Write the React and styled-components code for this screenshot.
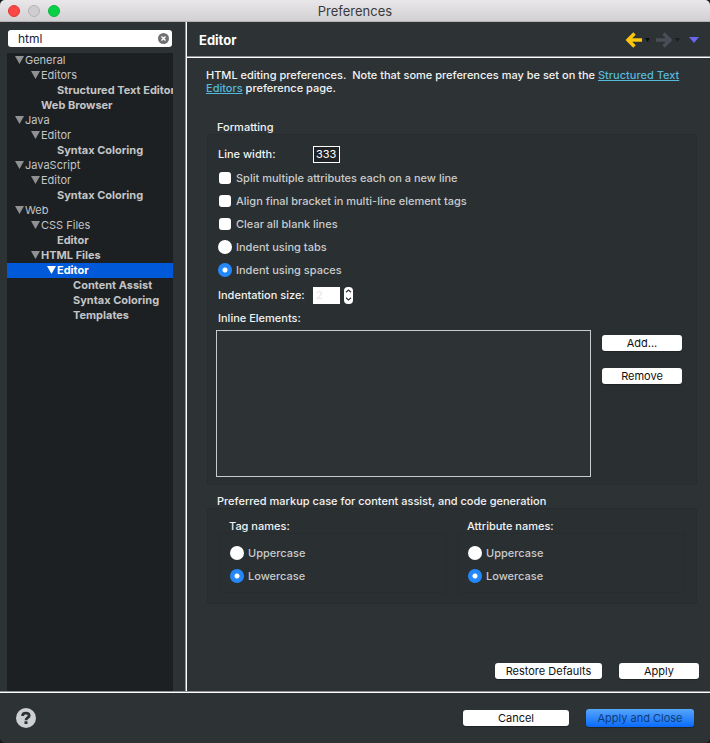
import React, { useState } from "react";
import styled, { createGlobalStyle } from "styled-components";

const GlobalStyle = createGlobalStyle`
  * { box-sizing: border-box; }
  body {
    margin: 0;
    background: #15181a;
    color: #f2f2f2;
    font: 500 11px/14px Inter, "Liberation Sans", sans-serif;
  }
  button, input { font: inherit; }
`;

const Window = styled.div`
  display: flex;
  flex-direction: column;
  min-height: 100vh;
  overflow: hidden;
  border-radius: 5px;
  background: #2d3235;
`;

const TitleBar = styled.header`
  display: grid;
  grid-template-columns: 1fr auto 1fr;
  align-items: center;
  height: 22px;
  padding: 0 8px;
  background: linear-gradient(#e9e7e9, #d2d0d2);
  border-bottom: 1px solid #b4b2b4;
`;

const Lights = styled.div`
  display: flex;
  gap: 8px;
`;

const Light = styled.button`
  width: 12px;
  height: 12px;
  padding: 0;
  border: 1px solid ${(p) => p.$edge};
  border-radius: 50%;
  background: ${(p) => p.$fill};
`;

const WindowTitle = styled.h1`
  margin: 0;
  font-size: 13px;
  font-weight: 400;
  color: #3b3a3b;
`;

const Body = styled.div`
  display: flex;
  flex: 1;
`;

const Sidebar = styled.aside`
  display: flex;
  flex-direction: column;
  flex: none;
  width: 187px;
  padding: 8px 13px 0 7px;
  border-right: 1px solid #fff;
  box-shadow: inset -1px 0 #8f9294;
`;

const SearchBox = styled.label`
  display: flex;
  align-items: center;
  height: 17px;
  margin: 0 1px 6px;
  padding: 0 3px 0 10px;
  border-radius: 3px;
  background: #fff;
`;

const SearchInput = styled.input`
  flex: 1;
  min-width: 0;
  padding: 0;
  border: 0;
  outline: 0;
  background: none;
  font-size: 12px;
  font-weight: 400;
  color: #23233a;
`;

const ClearButton = styled.button`
  display: flex;
  padding: 0;
  border: 0;
  background: none;
`;

const Tree = styled.ul`
  flex: 1;
  margin: 0;
  padding: 0;
  overflow: hidden;
  list-style: none;
  background: #1d2022;
`;

const TreeRow = styled.li`
  display: flex;
  align-items: center;
  height: 15px;
  padding-bottom: 1px;
  padding-left: ${(p) => 8 + p.$level * 16}px;
  white-space: nowrap;
  font-weight: ${(p) => (p.$bold ? 700 : 400)};
  color: ${(p) => (p.$selected ? "#fff" : "#c3c5c6")};
  background: ${(p) => (p.$selected ? "#0059d9" : "none")};
`;

const Twisty = styled.svg`
  flex: none;
  width: 10px;
  height: 8px;
  fill: ${(p) => (p.$selected ? "#fff" : "#8f9192")};
  visibility: ${(p) => (p.$open ? "visible" : "hidden")};
`;

const Page = styled.main`
  display: flex;
  flex-direction: column;
  flex: 1;
  min-width: 0;
`;

const PageHeader = styled.div`
  display: flex;
  align-items: center;
  justify-content: space-between;
  height: 36px;
  padding: 0 11px 0 12px;
  border-bottom: 1px solid #fff;
  box-shadow: inset 0 -1px #8f9294;
`;

const PageTitle = styled.h2`
  margin: 0;
  font-size: 13px;
  font-weight: 700;
  color: #fff;
`;

const NavTools = styled.div`
  display: flex;
  align-items: center;
`;

const NavButton = styled.button`
  display: flex;
  align-items: center;
  padding: 0;
  margin-left: ${(p) => p.$gap || 0}px;
  border: 0;
  background: none;
`;

const PageContent = styled.div`
  display: flex;
  flex-direction: column;
  flex: 1;
  padding: 11px 13px 0 19px;
`;

const Intro = styled.p`
  margin: 0 0 25px;
  line-height: 13px;
`;

const Link = styled.a`
  color: #55b9dc;
  text-decoration: underline;
`;

const Group = styled.section`
  margin: 0 0 9px 1px;
`;

const GroupTitle = styled.h3`
  margin: 0;
  padding-left: 10px;
  font-size: 11px;
  font-weight: 500;
  line-height: 14px;
`;

const GroupBox = styled.div`
  padding: ${(p) => p.$pad};
  border: 1px solid #282c2f;
  border-radius: 3px;
  background: #2a2f32;
`;

const Stack = styled.div`
  display: flex;
  flex-direction: column;
  gap: 1px;
`;

const Row = styled.div`
  display: flex;
  align-items: center;
  height: 22px;
  margin: ${(p) => p.$margin || "0"};
`;

const FieldLabel = styled.label`
  width: ${(p) => (p.$wide ? "auto" : "95px")};
`;

const Option = styled.label`
  display: flex;
  align-items: center;
  gap: 4px;
  height: 22px;
  color: #c9cbcc;
`;

const Check = styled.input.attrs({ type: "checkbox" })`
  appearance: none;
  width: 12px;
  height: 12px;
  margin: 0 1px;
  border-radius: 3px;
  background: #fff;
  &:checked { background: #2a8cff; }
`;

const Radio = styled.input.attrs({ type: "radio" })`
  appearance: none;
  width: 14px;
  height: 14px;
  margin: 0;
  border-radius: 50%;
  background: #fff;
  &:checked { background: radial-gradient(circle, #fff 0 2px, #2488fb 3px); }
`;

const NumberField = styled.input`
  width: 27px;
  height: 17px;
  padding: 0 2px;
  border: 1px solid #fff;
  border-radius: 0;
  outline: 0;
  font-weight: 400;
  background: ${(p) => (p.$faded ? "#fff" : "#1f2325")};
  color: ${(p) => (p.$faded ? "#e6e6e6" : "#fff")};
`;

const Stepper = styled.div`
  display: flex;
  flex-direction: column;
  width: 9px;
  height: 17px;
  margin-left: 4px;
  overflow: hidden;
  border-radius: 4px;
  background: #fff;
`;

const StepButton = styled.button`
  display: flex;
  flex: 1;
  align-items: center;
  justify-content: center;
  padding: 0;
  border: 0;
  background: none;
`;

const ListArea = styled.div`
  display: flex;
  gap: 11px;
  margin-left: -2px;
`;

const ListBox = styled.div`
  flex: 1;
  height: 147px;
  border: 1px solid #c9cbcc;
  background: #2d3235;
`;

const ListButtons = styled.div`
  display: flex;
  flex-direction: column;
  gap: 17px;
  padding-top: 5px;
`;

const Button = styled.button`
  min-width: ${(p) => p.$width || 80}px;
  height: ${(p) => (p.$primary ? 18 : 16)}px;
  padding: 0 9px;
  border: 0;
  border-radius: 3px;
  line-height: 16px;
  font-weight: 400;
  color: ${(p) => (p.$primary ? "#0d3d7c" : "#111")};
  background: ${(p) => (p.$primary ? "linear-gradient(#56a6fb, #0a6bfb)" : "#fff")};
  box-shadow: 0 1px 1px #1f2325;
`;

const Columns = styled.div`
  display: grid;
  grid-template-columns: 1fr 1fr;
  gap: 10px;
`;

const PageActions = styled.div`
  display: flex;
  justify-content: flex-end;
  gap: 17px;
  margin-top: auto;
  padding: 12px 11px 12px 20px;
`;

const Footer = styled.footer`
  display: flex;
  align-items: center;
  height: 52px;
  padding: 0 16px;
  border-top: 1px solid #8f9294;
  box-shadow: inset 0 1px #fff;
`;

const HelpButton = styled.button`
  display: flex;
  margin-right: auto;
  padding: 0;
  border: 0;
  background: none;
`;

const FooterActions = styled.div`
  display: flex;
  align-items: center;
  gap: 17px;
`;

const TREE = [
  { label: "General", level: 0, open: true },
  { label: "Editors", level: 1, open: true },
  { label: "Structured Text Editors", level: 2, bold: true },
  { label: "Web Browser", level: 1, bold: true },
  { label: "Java", level: 0, open: true },
  { label: "Editor", level: 1, open: true },
  { label: "Syntax Coloring", level: 2, bold: true },
  { label: "JavaScript", level: 0, open: true },
  { label: "Editor", level: 1, open: true },
  { label: "Syntax Coloring", level: 2, bold: true },
  { label: "Web", level: 0, open: true },
  { label: "CSS Files", level: 1, open: true },
  { label: "Editor", level: 2, bold: true },
  { label: "HTML Files", level: 1, open: true, bold: true },
  { label: "Editor", level: 2, open: true, bold: true, selected: true },
  { label: "Content Assist", level: 3, bold: true },
  { label: "Syntax Coloring", level: 3, bold: true },
  { label: "Templates", level: 3, bold: true },
];

const Arrow = ({ color, flip }) => (
  <svg width="16" height="16" viewBox="0 0 16 16" aria-hidden="true">
    <path
      d="M8.5 1.5 2 8l6.500 6.500M2.500 8H16"
      transform={flip ? "matrix(-1 0 0 1 16 0)" : undefined}
      fill="none"
      stroke={color}
      strokeWidth="3.500"
    />
  </svg>
);

const Caret = ({ color, width, height }) => (
  <svg width={width} height={height} viewBox="0 0 10 6" preserveAspectRatio="none" aria-hidden="true">
    <path d="M0 0h10L5 6z" fill={color} />
  </svg>
);

const Chevron = ({ down }) => (
  <svg width="7" height="4" viewBox="0 0 7 4" aria-hidden="true">
    <path
      d={down ? "M1 .7l2.500 2.300L6 .7" : "M1 3.300l2.500-2.300L6 3.300"}
      fill="none"
      stroke="#333"
      strokeWidth="1.200"
    />
  </svg>
);

function CaseChoice({ title, name }) {
  return (
    <section>
      <GroupTitle>{title}</GroupTitle>
      <GroupBox $pad="8px 10px 5px">
        <Stack>
          <Option><Radio name={name} />Uppercase</Option>
          <Option><Radio name={name} defaultChecked />Lowercase</Option>
        </Stack>
      </GroupBox>
    </section>
  );
}

export default function App() {
  const [filter, setFilter] = useState("html");
  const [size, setSize] = useState(2);

  return (
    <>
      <GlobalStyle />
      <Window>
        <TitleBar>
          <Lights>
            <Light aria-label="Close" $fill="#fc4744" $edge="#dc3a36" />
            <Light aria-label="Minimize" $fill="#cfcdcf" $edge="#b5b3b5" />
            <Light aria-label="Zoom" $fill="#07d146" $edge="#0bb53d" />
          </Lights>
          <WindowTitle>Preferences</WindowTitle>
        </TitleBar>
        <Body>
          <Sidebar>
            <SearchBox>
              <SearchInput aria-label="Filter" value={filter} onChange={(e) => setFilter(e.target.value)} />
              <ClearButton aria-label="Clear filter" onClick={() => setFilter("")}>
                <svg width="11" height="11" viewBox="0 0 11 11" aria-hidden="true">
                  <circle cx="5.500" cy="5.500" r="5.500" fill="#6f7173" />
                  <path d="M3.500 3.500l4 4M7.500 3.500l-4 4" stroke="#fff" strokeWidth="1.400" />
                </svg>
              </ClearButton>
            </SearchBox>
            <Tree role="tree">
              {TREE.map((n, i) => (
                <TreeRow key={i} role="treeitem" aria-selected={!!n.selected} $level={n.level} $bold={n.bold} $selected={n.selected}>
                  <Twisty viewBox="0 0 10 8" $open={n.open} $selected={n.selected} aria-hidden="true">
                    <path d="M0 0h9L4.500 8z" />
                  </Twisty>
                  {n.label}
                </TreeRow>
              ))}
            </Tree>
          </Sidebar>
          <Page>
            <PageHeader>
              <PageTitle>Editor</PageTitle>
              <NavTools>
                <NavButton aria-label="Back"><Arrow color="#fcc60f" /></NavButton>
                <NavButton aria-label="Back history" $gap={3}><Caret color="#0c0d0e" width={5} height={4} /></NavButton>
                <NavButton aria-label="Forward" $gap={6}><Arrow color="#4a4d57" flip /></NavButton>
                <NavButton aria-label="Forward history" $gap={3}><Caret color="#1b1e20" width={5} height={4} /></NavButton>
                <NavButton aria-label="Menu" $gap={9}><Caret color="#6a66f0" width={10} height={6} /></NavButton>
              </NavTools>
            </PageHeader>
            <PageContent>
              <Intro>
                {"HTML editing preferences.\u00a0 Note that some preferences may be set on the "}
                <Link href="#editors">Structured Text Editors</Link>
                {" preference page."}
              </Intro>
              <Group>
                <GroupTitle>Formatting</GroupTitle>
                <GroupBox $pad="8px 14px 7px 10px">
                  <Stack>
                    <Row $margin="0 0 1px">
                      <FieldLabel htmlFor="line-width">Line width:</FieldLabel>
                      <NumberField id="line-width" defaultValue="333" />
                    </Row>
                    <Option><Check />Split multiple attributes each on a new line</Option>
                    <Option><Check />Align final bracket in multi-line element tags</Option>
                    <Option><Check />Clear all blank lines</Option>
                    <Option><Radio name="indent" />Indent using tabs</Option>
                    <Option><Radio name="indent" defaultChecked />Indent using spaces</Option>
                    <Row $margin="2px 0 0">
                      <FieldLabel htmlFor="indent-size">Indentation size:</FieldLabel>
                      <NumberField id="indent-size" $faded value={size} onChange={(e) => setSize(Number(e.target.value) || 0)} />
                      <Stepper>
                        <StepButton aria-label="Increase" onClick={() => setSize(size + 1)}><Chevron /></StepButton>
                        <StepButton aria-label="Decrease" onClick={() => setSize(Math.max(0, size - 1))}><Chevron down /></StepButton>
                      </Stepper>
                    </Row>
                    <Row><FieldLabel as="span" id="inline-label" $wide>Inline Elements:</FieldLabel></Row>
                    <ListArea>
                      <ListBox role="listbox" aria-labelledby="inline-label" tabIndex={0} />
                      <ListButtons>
                        <Button>Add...</Button>
                        <Button>Remove</Button>
                      </ListButtons>
                    </ListArea>
                  </Stack>
                </GroupBox>
              </Group>
              <Group>
                <GroupTitle>Preferred markup case for content assist, and code generation</GroupTitle>
                <GroupBox $pad="10px 11px">
                  <Columns>
                    <CaseChoice title="Tag names:" name="tag-case" />
                    <CaseChoice title="Attribute names:" name="attribute-case" />
                  </Columns>
                </GroupBox>
              </Group>
            </PageContent>
            <PageActions>
              <Button $width={107}>Restore Defaults</Button>
              <Button>Apply</Button>
            </PageActions>
          </Page>
        </Body>
        <Footer>
          <HelpButton aria-label="Help">
            <svg width="20" height="20" viewBox="0 0 20 20" aria-hidden="true">
              <circle cx="10" cy="10" r="10" fill="#cdcfd0" />
              <path d="M6.600 8c0-2 1.400-2.800 3.300-2.800s3.300 .9 3.300 2.500c0 2.100-3.200 2-3.200 4.600" fill="none" stroke="#2d3235" strokeWidth="2.800" />
              <path d="M8.500 13.300h3v2.800h-3z" fill="#2d3235" />
            </svg>
          </HelpButton>
          <FooterActions>
            <Button $width={106}>Cancel</Button>
            <Button $width={108} $primary>Apply and Close</Button>
          </FooterActions>
        </Footer>
      </Window>
    </>
  );
}
